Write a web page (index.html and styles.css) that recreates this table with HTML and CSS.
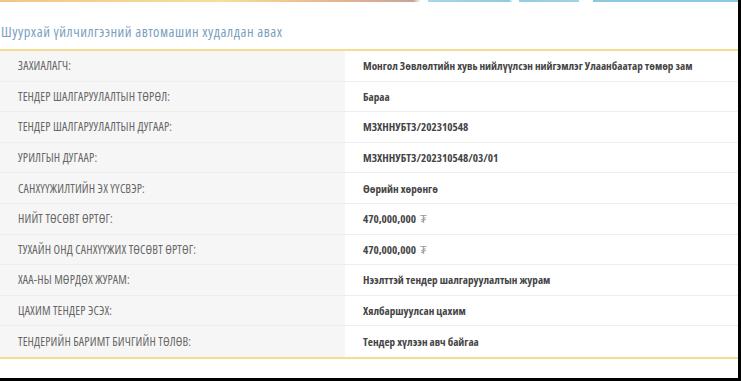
FILE: index.html
```html
<!DOCTYPE html>
<html lang="mn">
<head>
<meta charset="utf-8">
<link rel="stylesheet" href="styles.css">
</head>
<body>
<div class="frame">
  <div class="topbar"></div>
  <h1 class="title">Шуурхай үйлчилгээний автомашин худалдан авах</h1>
  <div class="table">
    <div class="row"><div class="label">ЗАХИАЛАГЧ:</div><div class="value">Монгол Зөвлөлтийн хувь нийлүүлсэн нийгэмлэг Улаанбаатар төмөр зам</div></div>
    <div class="row"><div class="label">ТЕНДЕР ШАЛГАРУУЛАЛТЫН ТӨРӨЛ:</div><div class="value">Бараа</div></div>
    <div class="row"><div class="label">ТЕНДЕР ШАЛГАРУУЛАЛТЫН ДУГААР:</div><div class="value">МЗХННУБТЗ/202310548</div></div>
    <div class="row"><div class="label">УРИЛГЫН ДУГААР:</div><div class="value">МЗХННУБТЗ/202310548/03/01</div></div>
    <div class="row"><div class="label">САНХҮҮЖИЛТИЙН ЭХ ҮҮСВЭР:</div><div class="value">Өөрийн хөрөнгө</div></div>
    <div class="row"><div class="label">НИЙТ ТӨСӨВТ ӨРТӨГ:</div><div class="value">470,000,000 <span class="cur">₮</span></div></div>
    <div class="row"><div class="label">ТУХАЙН ОНД САНХҮҮЖИХ ТӨСӨВТ ӨРТӨГ:</div><div class="value">470,000,000 <span class="cur">₮</span></div></div>
    <div class="row"><div class="label">ХАА-НЫ МӨРДӨХ ЖУРАМ:</div><div class="value">Нээлттэй тендер шалгаруулалтын журам</div></div>
    <div class="row"><div class="label">ЦАХИМ ТЕНДЕР ЭСЭХ:</div><div class="value">Хялбаршуулсан цахим</div></div>
    <div class="row"><div class="label">ТЕНДЕРИЙН БАРИМТ БИЧГИЙН ТӨЛӨВ:</div><div class="value">Тендер хүлээн авч байгаа</div></div>
  </div>
</div>
</body>
</html>
```

FILE: styles.css
```css
html, body {
  margin: 0;
  padding: 0;
  background: #fff;
}
.frame {
  width: 738px;
  height: 378px;
  border-right: 3px solid #000;
  border-bottom: 3px solid #000;
  overflow: hidden;
  font-family: "Open Sans", sans-serif;
  font-stretch: 75%;
}
.topbar {
  height: 2px;
  background: linear-gradient(to right, #f3c48c 0%, #f8dd9c 30%, #e9b58f 45%, #c9a39a 56%, #ffffff 57%, #ffffff 58%, #a6d6e8 58%, #8fcbe4 69%, #ffffff 69.5%, #ffffff 70.3%, #93cde6 70.3%, #9fd2e7 78.5%, #ffffff 78.5%, #ffffff 80.3%, #8cc8e2 80.3%, #8cc8e2 100%);
}
.title {
  margin: 0;
  padding: 22px 0 9px 1px;
  font-size: 14.5px;
  line-height: 16px;
  font-weight: normal;
  letter-spacing: 0.5px;
  color: #7a9fbf;
  border-bottom: 2px solid #f6db93;
}
.table {
  border-bottom: 2px solid #f6db93;
}
.row {
  display: grid;
  grid-template-columns: 345px 1fr;
  height: 29.6px;
  border-bottom: 1px solid #eeeeee;
  font-size: 12px;
}
.row:last-child {
  border-bottom: none;
  height: 30.6px;
}
.label {
  background: #f6f6f6;
  color: #666;
  padding-left: 18px;
  letter-spacing: 0.15px;
  display: flex;
  align-items: center;
}
.value {
  color: #454545;
  font-weight: bold;
  font-size: 11.2px;
  padding-left: 18px;
  display: flex;
  align-items: center;
}
.cur {
  color: #999;
  font-weight: normal;
  margin-left: 4px;
}
```
